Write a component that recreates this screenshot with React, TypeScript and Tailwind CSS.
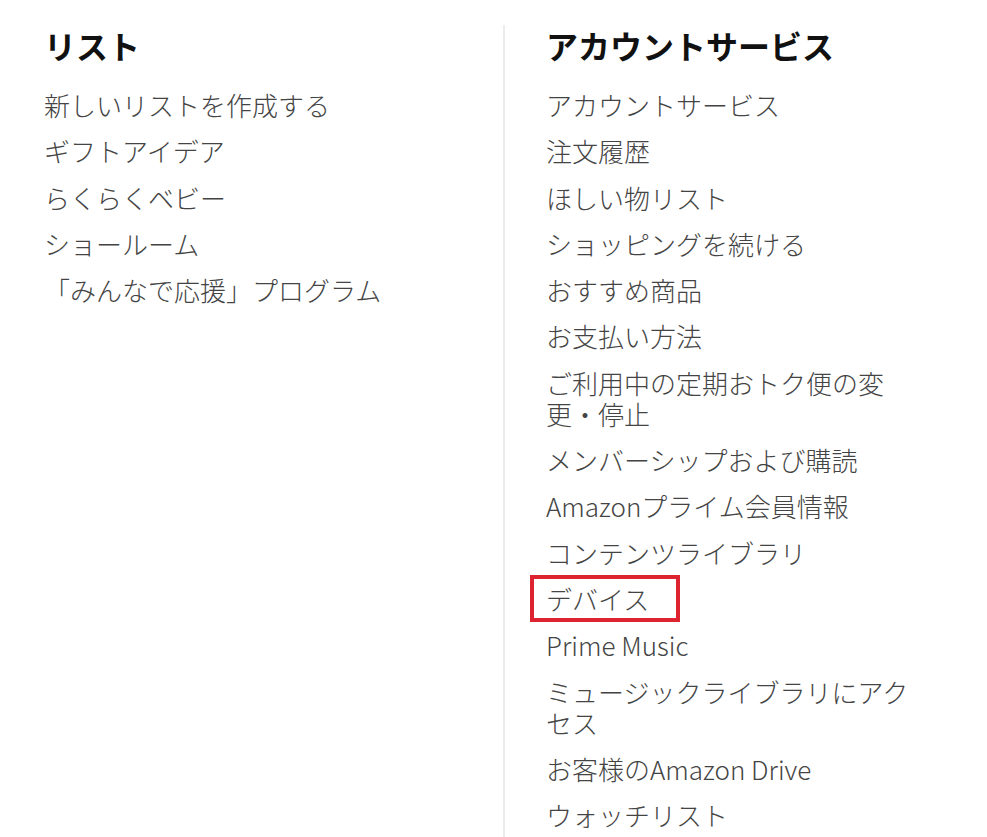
const lists = [
  '新しいリストを作成する',
  'ギフトアイデア',
  'らくらくベビー',
  'ショールーム',
  '「みんなで応援」プログラム',
];

const account = [
  'アカウントサービス',
  '注文履歴',
  'ほしい物リスト',
  'ショッピングを続ける',
  'おすすめ商品',
  'お支払い方法',
  'ご利用中の定期おトク便の変更・停止',
  'メンバーシップおよび購読',
  'Amazonプライム会員情報',
  'コンテンツライブラリ',
  'デバイス',
  'Prime Music',
  'ミュージックライブラリにアクセス',
  'お客様のAmazon Drive',
  'ウォッチリスト',
];

function LinkItem({ label, highlight = false }: { label: string; highlight?: boolean }) {
  return (
    <li className="relative mb-[15.3px] text-[26px] leading-[31px] text-[#444]">
      {label}
      {/* 注目枠 */}
      {highlight && (
        <span className="pointer-events-none absolute -left-[16px] -top-[8px] h-[47px] w-[150px] border-[4px] border-[#dd2330]" />
      )}
    </li>
  );
}

function Column({ title, items, className = '' }: { title: string; items: string[]; className?: string }) {
  return (
    <div className={className}>
      <h2 className="mb-[24px] text-[32px] font-bold leading-[40px] text-[#111]">{title}</h2>
      <ul>
        {items.map((item) => (
          <LinkItem key={item} label={item} highlight={item === 'デバイス'} />
        ))}
      </ul>
    </div>
  );
}

export default function App() {
  return (
    <div
      className="flex h-[837px] w-[987px] overflow-hidden bg-white pt-[25px] font-light"
      style={{ fontFamily: '"Noto Sans CJK JP", "Noto Sans", sans-serif' }}
    >
      <Column title="リスト" items={lists} className="w-[503px] shrink-0 pl-[44px]" />
      <div className="w-[2px] shrink-0 bg-[#ececec]" />
      <Column title="アカウントサービス" items={account} className="w-[420px] shrink-0 pl-[41px] pr-[4px]" />
    </div>
  );
}
